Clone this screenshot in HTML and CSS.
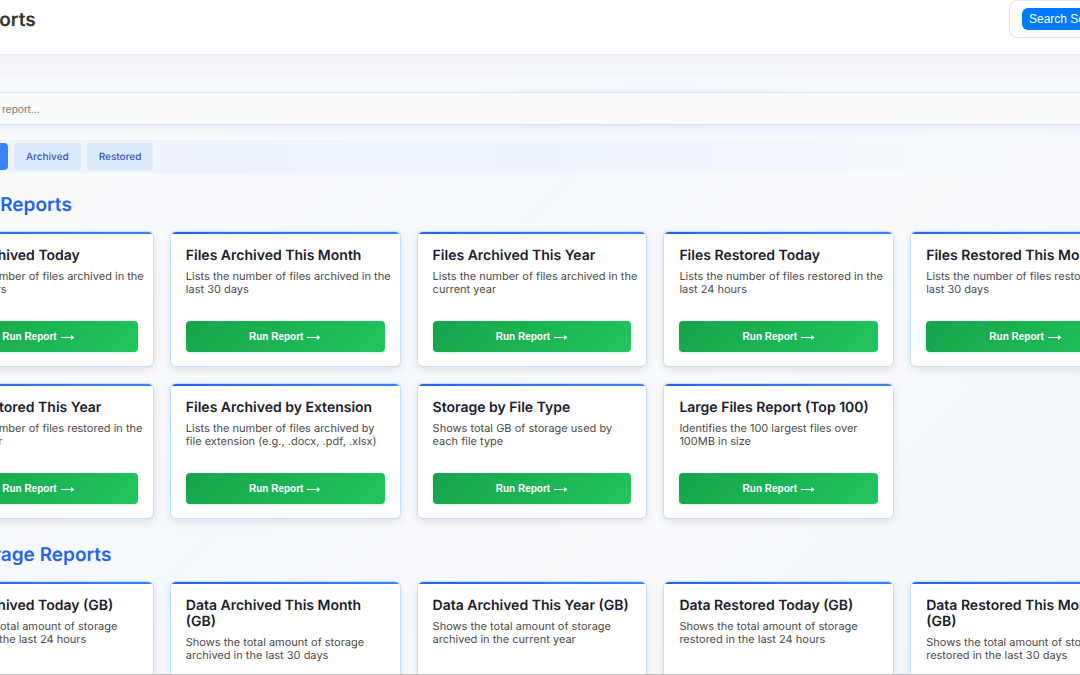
FILE: index.html
```html
<!DOCTYPE html>
<html lang="en">
  <head>
    <meta charset="UTF-8" />
    <meta name="viewport" content="width=device-width, initial-scale=1.0" />
    <title>Reports</title>
    <link rel="stylesheet" href="styles.css">
  </head>
  <body>
    <header class="topbar">
      <h1>Reports</h1>
      <div class="search-server">
        <button type="button">Search Settings</button>
      </div>
    </header>

    <main class="content">
      <div class="search-row">
        <input type="text" class="report-search" placeholder="Search report..." aria-label="Search report" />
      </div>

      <div class="filters">
        <button type="button" class="filter active">All</button>
        <button type="button" class="filter">Archived</button>
        <button type="button" class="filter">Restored</button>
      </div>

      <section>
        <h2>File Reports</h2>
        <div class="cards" id="file-reports"></div>
      </section>

      <section>
        <h2>Storage Reports</h2>
        <div class="cards" id="storage-reports"></div>
      </section>
    </main>

    <script>
      const fileReports = [
        ["Files Archived Today", "Lists the number of files archived in the last 24 hours"],
        ["Files Archived This Month", "Lists the number of files archived in the last 30 days"],
        ["Files Archived This Year", "Lists the number of files archived in the current year"],
        ["Files Restored Today", "Lists the number of files restored in the last 24 hours"],
        ["Files Restored This Month", "Lists the number of files restored in the last 30 days"],
        ["Files Restored This Year", "Lists the number of files restored in the current year"],
        ["Files Archived by Extension", "Lists the number of files archived by file extension (e.g., .docx, .pdf, .xlsx)"],
        ["Storage by File Type", "Shows total GB of storage used by each file type"],
        ["Large Files Report (Top 100)", "Identifies the 100 largest files over 100MB in size"],
      ];
      const storageReports = [
        ["Data Archived Today (GB)", "Shows the total amount of storage archived in the last 24 hours"],
        ["Data Archived This Month (GB)", "Shows the total amount of storage archived in the last 30 days"],
        ["Data Archived This Year (GB)", "Shows the total amount of storage archived in the current year"],
        ["Data Restored Today (GB)", "Shows the total amount of storage restored in the last 24 hours"],
        ["Data Restored This Month (GB)", "Shows the total amount of storage restored in the last 30 days"],
      ];

      function renderCards(id, reports) {
        document.getElementById(id).innerHTML = reports
          .map(
            ([title, text]) => `<article class="card">
              <h3>${title}</h3>
              <p>${text}</p>
              <button type="button" class="run">Run Report
                <svg class="arrow" viewBox="0 0 14 8" aria-hidden="true">
                  <path d="M0 4.5H12" stroke="currentColor" />
                  <path d="M10 2L13.5 4.5L10 7Z" fill="currentColor" />
                </svg>
              </button>
            </article>`
          )
          .join("");
      }

      renderCards("file-reports", fileReports);
      renderCards("storage-reports", storageReports);
    </script>
  </body>
</html>
```

FILE: styles.css
```css
* {
  box-sizing: border-box;
}
body {
  height: 100vh;
  margin: 0;
  overflow: hidden;
  font-family: Inter, "Liberation Sans", sans-serif;
  text-rendering: geometricPrecision;
  background-color: #f5f6fa;
  border-bottom: 1px solid #b8b8b8;
}
h1,
h2,
h3,
p {
  margin: 0;
}
button {
  border: none;
  cursor: pointer;
}
.topbar {
  display: flex;
  align-items: center;
  justify-content: space-between;
  margin: 0 -61px 0 -77px;
  padding: 0 0 16px 41px;
  background-color: #fff;
  border-bottom: 1px solid #ebecee;
  box-shadow: 0 1px 3px rgba(0, 0, 0, 0.04);
}
.topbar h1 {
  padding-top: 2px;
  font-size: 19px;
  line-height: 24px;
  font-weight: 600;
  color: #333;
}
.search-server {
  width: 132px;
  padding: 7px 12px;
  border: 1px solid #e4e4e4;
  border-radius: 8px;
}
.search-server button {
  display: block;
  width: 100%;
  height: 22px;
  padding: 0 7px;
  font: 12px "Liberation Sans", sans-serif;
  text-align: left;
  color: #fff;
  background-color: #007bff;
  border-radius: 6px;
}
.content {
  margin: 22px -61px 0 -77px;
  padding-top: 16px;
  background: linear-gradient(135deg, #f9fafc 0%, #f9fafc 15%, #f5f8fd 40%, #f9fafc 60%, #f3f7fb 85%, #f9fafc 100%);
}
.report-search {
  display: block;
  width: 100%;
  height: 31px;
  padding: 0 41px;
  font: 11px "Liberation Sans", sans-serif;
  background-color: #f9fafc;
  border: none;
  box-shadow: 0 4px 12px rgba(59, 130, 246, 0.1), 0 0 1px 1px #e4ebf5;
}
.report-search::placeholder {
  color: #7c7c7c;
}
.filters {
  display: flex;
  gap: 6px;
  margin-top: 16px;
  padding: 3px 0 3px 40px;
  background: linear-gradient(90deg, #eff4fb, #eff5fe 50%, #f9fafc);
}
.filter {
  height: 27px;
  padding: 0 12px;
  font: 500 10px Inter, sans-serif;
  text-rendering: geometricPrecision;
  color: #3555b8;
  background-color: #dbeafe;
  border-radius: 4px;
}
.filter.active {
  width: 45px;
  color: #fff;
  background-color: #3b82f6;
}
h2 {
  padding: 20px 0 14px 40px;
  font-size: 19px;
  line-height: 24px;
  font-weight: 600;
  color: #2563eb;
}
section + section h2 {
  padding-top: 24px;
}
.cards {
  display: grid;
  grid-template-columns: repeat(5, 1fr);
  gap: 16px;
}
.card {
  position: relative;
  display: flex;
  flex-direction: column;
  padding: 16px 15px 14px;
  background-color: #fff;
  border: 1px solid #bfe3fb;
  border-radius: 6px;
  box-shadow: 0 3px 8px rgba(15, 23, 42, 0.1);
  overflow: hidden;
}
.card::before {
  content: "";
  position: absolute;
  top: -1px;
  left: 0;
  right: 0;
  height: 3px;
  background: linear-gradient(90deg, #2563eb, #3b82f6);
}
.card h3 {
  font-size: 14px;
  line-height: 16px;
  font-weight: 600;
  color: #1a202c;
}
.card p {
  flex: 1;
  margin: 6px -7px 25px 0;
  font-size: 11px;
  line-height: 13px;
  color: #4a4a4a;
}
.run {
  display: flex;
  align-items: center;
  justify-content: center;
  gap: 4px;
  height: 31px;
  font: bold 10px "Liberation Sans", sans-serif;
  color: #fff;
  background: linear-gradient(135deg, #16a34a, #22c55e);
  border-radius: 4px;
  box-shadow: 0 1px 3px rgba(22, 163, 74, 0.2);
}
.arrow {
  width: 14px;
  height: 8px;
}
```
